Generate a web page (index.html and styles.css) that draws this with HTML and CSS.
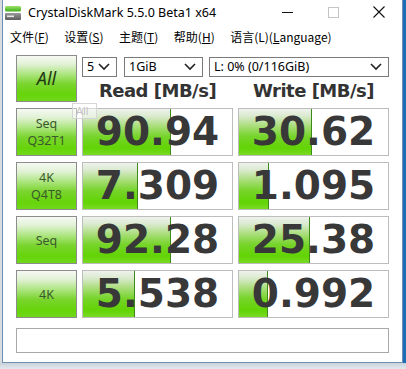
FILE: index.html
```html
<!DOCTYPE html>
<html lang="zh">
<head>
<meta charset="utf-8">
<title>CrystalDiskMark</title>
<link rel="stylesheet" href="styles.css">
</head>
<body>
<div class="screen">
  <div class="desk-left"></div>
  <div class="window">
    <div class="titlebar">
      <svg class="app-icon" width="16" height="14" viewBox="0 0 16 14">
        <defs>
          <linearGradient id="ig" x1="0" y1="0" x2="0" y2="1">
            <stop offset="0" stop-color="#9be36a"/>
            <stop offset="1" stop-color="#3fae1a"/>
          </linearGradient>
          <linearGradient id="gg" x1="0" y1="0" x2="0" y2="1">
            <stop offset="0" stop-color="#9a9a9a"/>
            <stop offset="1" stop-color="#5c5c5c"/>
          </linearGradient>
        </defs>
        <rect x="0" y="0" width="16" height="5.5" rx="1.5" fill="url(#ig)"/>
        <rect x="0" y="7" width="16" height="7" rx="1" fill="url(#gg)"/>
        <rect x="2" y="9.5" width="7" height="1.6" fill="#e8e8e8"/>
      </svg>
      <span class="title">CrystalDiskMark 5.5.0 Beta1 x64</span>
      <div class="controls">
        <span class="ctl"><svg width="11" height="11" viewBox="0 0 11 11"><line x1="0" y1="5.5" x2="11" y2="5.5" stroke="#111" stroke-width="1"/></svg></span>
        <span class="ctl"><svg width="11" height="11" viewBox="0 0 11 11"><rect x="0.5" y="0.5" width="10" height="10" fill="none" stroke="#c4c4c4" stroke-width="1"/></svg></span>
        <span class="ctl"><svg width="12" height="12" viewBox="0 0 12 12"><path d="M0.5 0.5 L11.5 11.5 M11.5 0.5 L0.5 11.5" stroke="#111" stroke-width="1.1"/></svg></span>
      </div>
    </div>
    <div class="menubar">
      <span class="menu-item">文件(<u>F</u>)</span>
      <span class="menu-item">设置(<u>S</u>)</span>
      <span class="menu-item">主题(<u>T</u>)</span>
      <span class="menu-item">帮助(<u>H</u>)</span>
      <span class="menu-item">语言(L)(<u>L</u>anguage)</span>
    </div>
    <div class="content">
      <div class="grid">
        <div class="btn btn-all">All</div>
        <div class="top-right">
          <div class="selects">
            <div class="select sel-count"><span>5</span><svg class="chev" width="12" height="8" viewBox="0 0 12 8"><polyline points="1,1 6,6 11,1" fill="none" stroke="#222" stroke-width="1.6"/></svg></div>
            <div class="select sel-size"><span>1GiB</span><svg class="chev" width="12" height="8" viewBox="0 0 12 8"><polyline points="1,1 6,6 11,1" fill="none" stroke="#222" stroke-width="1.6"/></svg></div>
            <div class="select sel-drive"><span>L: 0% (0/116GiB)</span><svg class="chev" width="12" height="8" viewBox="0 0 12 8"><polyline points="1,1 6,6 11,1" fill="none" stroke="#222" stroke-width="1.6"/></svg></div>
          </div>
          <div class="headers">
            <div class="head">Read [MB/s]</div>
            <div class="head">Write [MB/s]</div>
          </div>
        </div>

        <div class="btn btn-test"><span>Seq</span><span>Q32T1</span></div>
        <div class="cell"><div class="bar" style="width:88px"></div><span class="val">90.94</span></div>
        <div class="cell"><div class="bar" style="width:73px"></div><span class="val">30.62</span></div>

        <div class="btn btn-test"><span>4K</span><span>Q4T8</span></div>
        <div class="cell"><div class="bar" style="width:55px"></div><span class="val">7.309</span></div>
        <div class="cell"><div class="bar" style="width:30px"></div><span class="val">1.095</span></div>

        <div class="btn btn-test"><span>Seq</span></div>
        <div class="cell"><div class="bar" style="width:88px"></div><span class="val">92.28</span></div>
        <div class="cell"><div class="bar" style="width:71px"></div><span class="val">25.38</span></div>

        <div class="btn btn-test"><span>4K</span></div>
        <div class="cell"><div class="bar" style="width:52px"></div><span class="val">5.538</span></div>
        <div class="cell"><div class="bar" style="width:29px"></div><span class="val">0.992</span></div>

        <div class="status"></div>
      </div>
      <div class="tip-ghost">All</div>
    </div>
  </div>
  <div class="desk-right"></div>
  <div class="desk-bottom"></div>
</div>
</body>
</html>
```
FILE: styles.css
```css
* { box-sizing: border-box; }
html, body { margin: 0; padding: 0; }
body {
  width: 406px;
  height: 369px;
  overflow: hidden;
  background: #dfe3e8;
  font-family: "Noto Sans", "Noto Sans CJK SC", sans-serif;
}
.screen {
  display: grid;
  grid-template-columns: 2px 401px 3px;
  grid-template-rows: 363px 6px;
  width: 406px;
  height: 369px;
}
.desk-left { background: #d8dce0; }
.desk-right { background: #1f6db4; }
.desk-bottom {
  grid-column: 1 / 4;
  background: linear-gradient(#c9d2dc, #e4e8ec);
}
.window {
  background: #fff;
  border-left: 1px solid #6f8fb3;
  border-right: 1px solid #6f8fb3;
  border-bottom: 1px solid #6f8fb3;
  display: flex;
  flex-direction: column;
  position: relative;
}
.titlebar {
  height: 27px;
  display: flex;
  align-items: center;
  padding-left: 2px;
}
.app-icon { flex: none; margin-top: -2px; }
.title {
  margin-left: 7px;
  font-family: "Noto Sans", sans-serif;
  font-size: 12.5px;
  color: #000;
  margin-top: -2px;
}
.controls {
  margin-left: auto;
  display: flex;
  height: 27px;
}
.ctl {
  width: 46px;
  display: flex;
  align-items: center;
  justify-content: center;
  margin-top: -3px;
}
.menubar {
  height: 20px;
  display: flex;
  align-items: center;
  padding-left: 7px;
  font-family: "Noto Sans CJK SC", sans-serif;
  font-size: 12px;
  color: #000;
}
.menu-item {
  padding: 0 7.5px 0 0;
  margin-right: 8px;
  line-height: 20px;
}
.menu-item u { text-decoration-thickness: 1px; text-underline-offset: 1px; }
.content {
  position: relative;
  padding: 8px 13px 0 13px;
}
.grid {
  display: grid;
  grid-template-columns: 61px 151px 151px;
  grid-template-rows: 47px 48px 48px 48px 48px 29px;
  column-gap: 5px;
  row-gap: 6px;
}
.btn {
  border: 1px solid #8c8c8c;
  background: linear-gradient(#f6f9f3 0%, #e2f2d6 18%, #a9e47a 42%, #7ad42e 62%, #66d40a 85%, #70d81a 100%);
  display: flex;
  flex-direction: column;
  align-items: center;
  justify-content: center;
  color: #3a5a2c;
}
.btn-all {
  font-size: 18px;
  font-style: italic;
  color: #1f3a12;
  padding-bottom: 1px;
}
.btn-test {
  font-size: 12.5px;
  line-height: 17px;
}
.btn-test span { display: block; height: 17px; }
.top-right {
  grid-column: 2 / 4;
  display: flex;
  flex-direction: column;
}
.selects {
  display: flex;
  height: 20px;
  margin-top: 2px;
}
.select {
  border: 1px solid #7a7a7a;
  height: 20px;
  display: flex;
  align-items: center;
  padding-left: 4px;
  padding-right: 6px;
  font-family: "Noto Sans", sans-serif;
  font-size: 12.5px;
  color: #000;
  background: #fff;
}
.select span { flex: 1; line-height: 18px; }
.chev { flex: none; }
.sel-count { width: 35px; margin-right: 7px; }
.sel-size { width: 79px; margin-right: 6px; }
.sel-drive { width: 180px; }
.headers {
  flex: 1;
  display: grid;
  grid-template-columns: 151px 151px;
  column-gap: 5px;
  align-items: center;
}
.head {
  text-align: center;
  font-family: "DejaVu Sans", sans-serif;
  font-weight: bold;
  font-size: 18px;
  letter-spacing: -0.5px;
  color: #333;
  padding-top: 2px;
}
.cell {
  position: relative;
  border: 1px solid #bdbdbd;
  background: #fff;
  display: flex;
  align-items: center;
  justify-content: center;
  overflow: hidden;
}
.bar {
  position: absolute;
  left: 0;
  top: 0;
  bottom: 0;
  background: linear-gradient(#eef2ec 0%, #dbead0 15%, #a3dc70 40%, #76d42a 60%, #62d404 85%, #7ada26 100%);
  border-right: 1px solid #3e8a18;
}
.val {
  position: relative;
  font-family: "DejaVu Sans", sans-serif;
  font-weight: bold;
  font-size: 39px;
  line-height: 46px;
  color: #383838;
}
.status {
  grid-column: 1 / 4;
  border: 1px solid #a8a8a8;
  margin-top: 4px;
  background: #fff;
}
.tip-ghost {
  position: absolute;
  left: 69px;
  top: 56px;
  width: 25px;
  height: 16px;
  border: 1px solid #d6d6d6;
  color: #c4c4c4;
  font-size: 11px;
  line-height: 14px;
  padding-left: 3px;
  background: rgba(255,255,255,0.4);
}
```
